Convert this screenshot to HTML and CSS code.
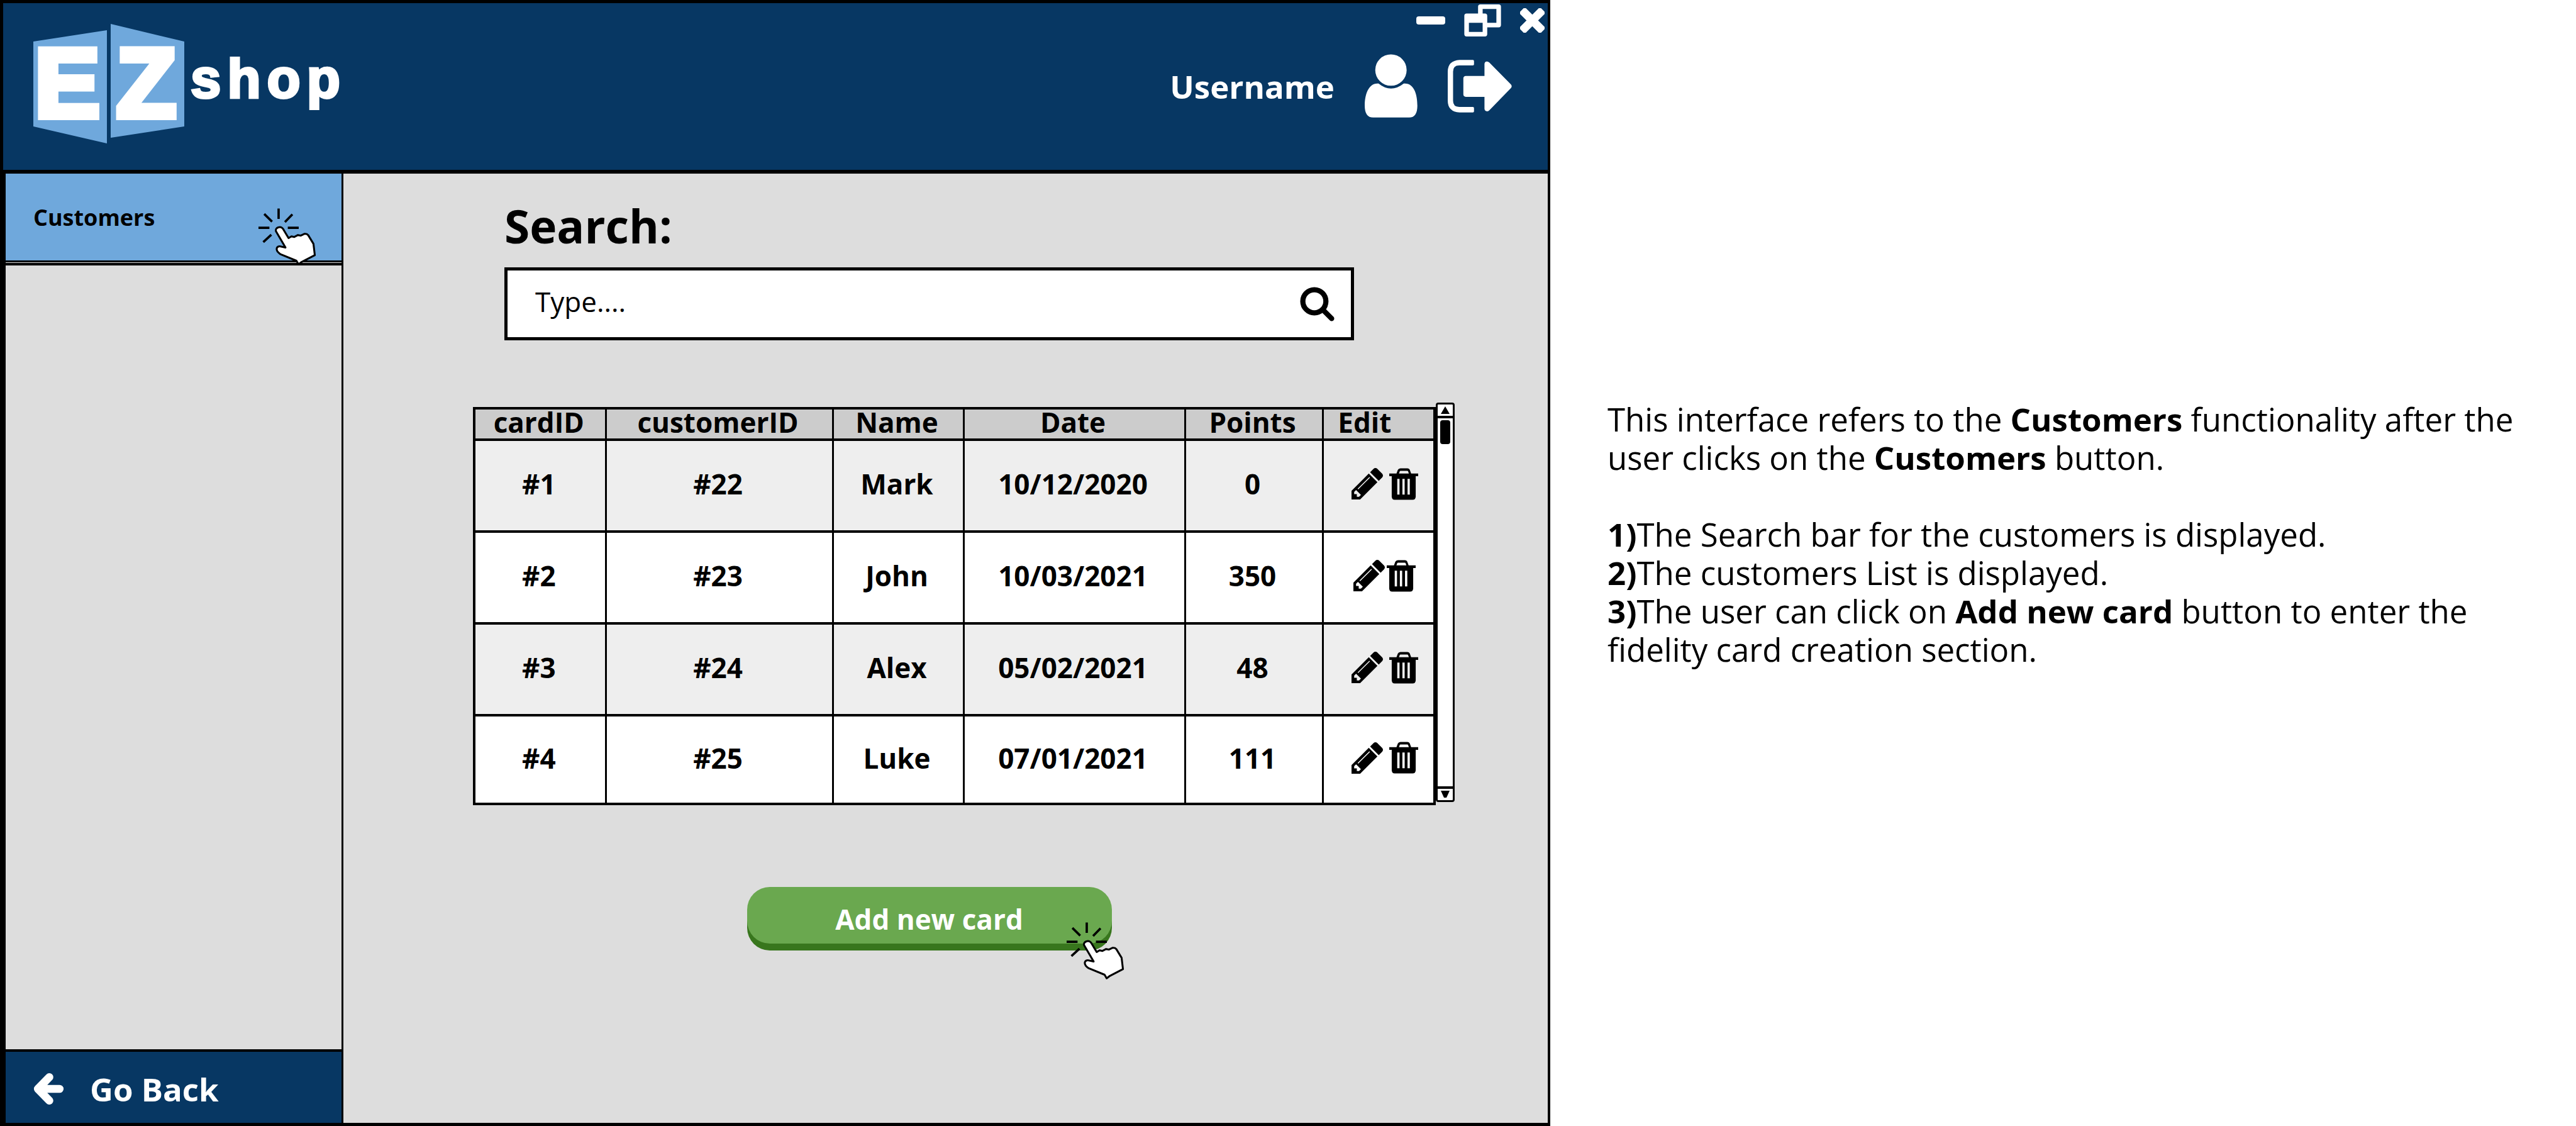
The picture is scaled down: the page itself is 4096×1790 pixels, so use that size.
FILE: index.html
```html
<!DOCTYPE html>
<html lang="en">
<head>
<meta charset="utf-8">
<title>EZShop - Customers</title>
<link rel="stylesheet" href="styles.css">
</head>
<body>
<svg class="sprite" aria-hidden="true">
  <symbol id="pencil" viewBox="128 149 1515 1515">
    <path d="M491 1536l91-91-235-235-91 91v107h128v128h107zm523-928q0-22-22-22-10 0-17 7l-542 542q-7 7-7 17 0 22 22 22 10 0 17-7l542-542q7-7 7-17zm-54-192l416 416-832 832h-416v-416zm683 96q0 53-37 90l-166 166-416-416 166-165q36-38 90-38 53 0 91 38l235 234q37 39 37 91z"/>
  </symbol>
  <symbol id="trash" viewBox="222 31 152 166">
    <path fill-rule="evenodd" d="M222 59H260L267 40Q271 31 281 31H317Q327 31 330 40L337 59H374V73H361V181Q359 197 345 197H250Q237 197 235 181V73H222ZM273 59H325L321 47Q320 45 317 45H281Q278 45 277 47ZM264 87V169H276V87ZM291 87V169H303V87ZM318 87V169H330V87Z"/>
  </symbol>
  <symbol id="click-hand" viewBox="96 100 302 302">
    <path d="M201 102V156M96 202H153M249 202H306M126 130L167 170M273 132L234 172M163 238L121 277" fill="none" stroke="#000" stroke-width="12"/>
    <path d="M187 220C182 200 212 190 225 209L253 256L268 247L283 250L302 240L316 243L335 234Q348 232 355 240L383 286L390 345L322 380L305 393L294 374L209 339C180 318 189 293 215 300L237 305Z" fill="#fff" stroke="#000" stroke-width="10" stroke-linejoin="round"/>
  </symbol>
</svg>
<div class="page">
  <div class="window">
    <header class="topbar">
      <svg class="logo" viewBox="0 0 490 192" role="img" aria-label="EZ shop">
        <path d="M0 28L117 10V190L0 163ZM123 0L240 28V163L123 181Z" fill="#6fa8dc"/>
        <text class="logo-mark" x="2" y="148">E</text>
        <text class="logo-mark" x="132" y="148">Z</text>
        <text class="logo-name" x="250" y="117">shop</text>
      </svg>
      <div class="topbar-tools">
        <div class="window-controls">
          <button type="button" class="icon-button" aria-label="Minimize">
            <svg width="46" height="13"><rect width="46" height="13" rx="4" fill="#fff"/></svg>
          </button>
          <button type="button" class="icon-button" aria-label="Restore">
            <svg width="59" height="51" viewBox="0 0 64 56"><path fill="#fff" fill-rule="evenodd" d="M28 0H60Q64 0 64 4V36Q64 40 60 40H40V52Q40 56 36 56H4Q0 56 0 52V20Q0 16 4 16H24V4Q24 0 28 0ZM32 8V16H36Q40 16 40 20V32H56V8ZM8 32V48H32V32Z"/></svg>
          </button>
          <button type="button" class="icon-button" aria-label="Close">
            <svg width="39" height="39" viewBox="0 0 42 42"><path d="M8 8L34 34M34 8L8 34" stroke="#fff" stroke-width="14" stroke-linecap="square" fill="none"/></svg>
          </button>
        </div>
        <div class="account">
          <span class="username">Username</span>
          <svg width="84" height="101" viewBox="30 51 276 331" fill="#fff" aria-hidden="true">
            <circle cx="167" cy="134" r="82"/>
            <path d="M102 204Q167 257 234 204C290 200 305 265 305 320Q305 382 262 382H74Q30 382 30 320C30 265 48 200 102 204Z"/>
          </svg>
          <button type="button" class="icon-button" aria-label="Log out">
            <svg width="102" height="84" viewBox="468 78 337 276" fill="#fff">
              <path d="M530 78H600Q606 78 606 84V101Q606 107 600 107H528Q496 107 496 139V293Q496 325 528 325H600Q606 325 606 331V348Q606 354 600 354H530Q468 350 468 292V140Q468 82 530 78Z"/>
              <path d="M661 162V99Q662 86 674 86Q680 86 686 91L800 207Q808 216 800 226L686 343Q680 348 674 348Q662 346 661 335V272H563Q550 271 550 259V175Q550 163 563 162Z"/>
            </svg>
          </button>
        </div>
      </div>
    </header>
    <div class="body">
      <nav class="sidebar">
        <a class="nav-item" href="#customers">Customers
          <svg class="pointer pointer-nav" aria-hidden="true"><use href="#click-hand"/></svg>
        </a>
        <div class="nav-space"></div>
        <a class="go-back" href="#back">
          <svg width="49" height="52" viewBox="0 0 54 57" aria-hidden="true"><path d="M28 8L8 28.500L28 49M10 28.500H46" stroke="#fff" stroke-width="14" stroke-linecap="round" stroke-linejoin="round" fill="none"/></svg>
          <span>Go Back</span>
        </a>
      </nav>
      <main class="content">
        <form class="search">
          <label class="search-label" for="search">Search:</label>
          <div class="search-box">
            <input id="search" type="text" placeholder="Type....">
            <button type="submit" class="icon-button" aria-label="Search">
              <svg width="55" height="55" viewBox="0 0 60 60" fill="none" stroke="#000"><circle cx="25" cy="25" r="20" stroke-width="9"/><path d="M40 40L55 55" stroke-width="9" stroke-linecap="round"/></svg>
            </button>
          </div>
        </form>
        <div class="list">
          <table class="cards">
            <colgroup><col class="c-card"><col class="c-customer"><col class="c-name"><col class="c-date"><col class="c-points"><col></colgroup>
            <thead>
              <tr><th>cardID</th><th>customerID</th><th>Name</th><th>Date</th><th>Points</th><th class="edit-head">Edit</th></tr>
            </thead>
            <tbody>
              <tr><td>#1</td><td>#22</td><td>Mark</td><td>10/12/2020</td><td>0</td>
                <td class="edit"><div class="actions"><button type="button" class="icon-button" aria-label="Edit card 1"><svg class="pencil"><use href="#pencil"/></svg></button><button type="button" class="icon-button" aria-label="Delete card 1"><svg class="trash"><use href="#trash"/></svg></button></div></td></tr>
              <tr><td>#2</td><td>#23</td><td>John</td><td>10/03/2021</td><td>350</td>
                <td class="edit"><div class="actions actions-tight"><button type="button" class="icon-button" aria-label="Edit card 2"><svg class="pencil"><use href="#pencil"/></svg></button><button type="button" class="icon-button" aria-label="Delete card 2"><svg class="trash"><use href="#trash"/></svg></button></div></td></tr>
              <tr><td>#3</td><td>#24</td><td>Alex</td><td>05/02/2021</td><td>48</td>
                <td class="edit"><div class="actions"><button type="button" class="icon-button" aria-label="Edit card 3"><svg class="pencil"><use href="#pencil"/></svg></button><button type="button" class="icon-button" aria-label="Delete card 3"><svg class="trash"><use href="#trash"/></svg></button></div></td></tr>
              <tr><td>#4</td><td>#25</td><td>Luke</td><td>07/01/2021</td><td>111</td>
                <td class="edit"><div class="actions"><button type="button" class="icon-button" aria-label="Edit card 4"><svg class="pencil"><use href="#pencil"/></svg></button><button type="button" class="icon-button" aria-label="Delete card 4"><svg class="trash"><use href="#trash"/></svg></button></div></td></tr>
            </tbody>
          </table>
          <div class="scrollbar">
            <button type="button" class="scroll-arrow scroll-up" aria-label="Scroll up"><svg width="14" height="12" viewBox="0 0 14 12"><path d="M7 0L14 12H0Z"/></svg></button>
            <div class="scroll-track"><div class="scroll-thumb"></div></div>
            <button type="button" class="scroll-arrow scroll-down" aria-label="Scroll down"><svg width="14" height="12" viewBox="0 0 14 12"><path d="M0 0H14L9 11H5Z"/></svg></button>
          </div>
        </div>
        <div class="add">
          <button type="button" class="add-button">Add new card
            <svg class="pointer pointer-add" aria-hidden="true"><use href="#click-hand"/></svg>
          </button>
        </div>
      </main>
    </div>
  </div>
  <aside class="notes">
    <p>This interface refers to the <b>Customers</b> functionality after the user clicks on the <b>Customers</b> button.</p>
    <p><b>1)</b>The Search bar for the customers is displayed.<br><b>2)</b>The customers List is displayed.<br><b>3)</b>The user can click on <b>Add new card</b> button to enter the fidelity card creation section.</p>
  </aside>
</div>
</body>
</html>
```
FILE: styles.css
```css
* { box-sizing: border-box; }

body {
  margin: 0;
  background: #fff;
  color: #000;
  font-family: "Open Sans", sans-serif;
}

button, input { font: inherit; color: inherit; }
svg { display: block; }
.sprite { position: absolute; width: 0; height: 0; }

.icon-button {
  display: block;
  padding: 0;
  border: 0;
  background: none;
}

.page {
  display: grid;
  grid-template-columns: 2465fr 1631fr;
  min-height: 100vh;
}

.window {
  display: flex;
  flex-direction: column;
  border: 5px solid #000;
  border-right-width: 4px;
  background: #ddd;
}

/* Top bar */
.topbar {
  display: flex;
  justify-content: space-between;
  min-height: 271px;
  border-bottom: 6px solid #000;
  background: #073763;
  color: #fff;
}

.logo {
  width: 490px;
  height: 192px;
  margin: 33px 0 0 48px;
  overflow: visible;
  fill: #fff;
}

.logo-mark, .logo-name {
  font-family: "Liberation Sans", Arial, sans-serif;
  font-weight: 700;
  stroke: #fff;
}

.logo-mark { font-size: 156px; stroke-width: 10px; }
.logo-name { font-size: 87px; stroke-width: 4px; letter-spacing: 10px; }

.topbar-tools {
  display: flex;
  flex-direction: column;
  gap: 28px;
  padding: 2px 5px 0 0;
}

.window-controls {
  display: flex;
  justify-content: flex-end;
  align-items: center;
  gap: 30px;
}

.account {
  display: flex;
  align-items: center;
  gap: 48px;
  padding-right: 52px;
}

.username { font-size: 51px; font-weight: 700; }

/* Sidebar */
.body { display: flex; flex: 1; }

.sidebar {
  display: flex;
  flex-direction: column;
  width: 541px;
  border: solid #000;
  border-width: 0 3px 0 4px;
}

.nav-item {
  position: relative;
  display: flex;
  align-items: center;
  height: 141px;
  padding-left: 44px;
  border-bottom: 3px solid #000;
  background: #6fa8dc;
  color: #000;
  font-size: 36px;
  font-weight: 700;
  text-decoration: none;
}

.nav-space {
  flex: 1;
  margin-top: 1px;
  border: solid #000;
  border-width: 4px 0;
}

.go-back {
  display: flex;
  align-items: center;
  gap: 41px;
  height: 113px;
  padding: 4px 0 0 44px;
  background: #073763;
  color: #fff;
  font-size: 51px;
  font-weight: 700;
  text-decoration: none;
}

.pointer {
  position: absolute;
  width: 92px;
  height: 92px;
}

.pointer-nav { right: 40px; bottom: -9px; }
.pointer-add { right: -20px; top: 56px; }

/* Main content */
.content {
  flex: 1;
  padding: 33px 148px 0 206px;
}

.search, .add { margin: 0 160px 0 50px; }

.search-label {
  display: block;
  font-size: 73px;
  font-weight: 700;
  line-height: 100px;
}

.search-box {
  display: flex;
  align-items: center;
  height: 116px;
  margin-top: 16px;
  padding: 0 26px 0 44px;
  border: 5px solid #000;
  background: #fff;
}

.search-box input {
  flex: 1;
  min-width: 0;
  padding: 0 0 8px;
  border: 0;
  outline: 0;
  background: none;
  font-size: 44px;
}

.search-box input::placeholder { color: #000; opacity: 1; }

.list {
  display: flex;
  margin-top: 99px;
}

.cards {
  flex: 1;
  margin-top: 7px;
  table-layout: fixed;
  border-collapse: collapse;
  border: 4px solid #000;
  background: #fff;
  font-size: 44px;
  font-weight: 700;
  line-height: 40px;
  text-align: center;
}

.c-card { width: 209px; }
.c-customer { width: 361px; }
.c-name { width: 208px; }
.c-date { width: 352px; }
.c-points { width: 219px; }

.cards th, .cards td {
  padding: 0 4px 6px 0;
  border: solid #000;
  border-width: 4px 3px;
}

.cards th { height: 49px; background: #ccc; }
.cards td { height: 146px; }
.cards tbody tr:nth-child(odd) { background: #eee; }
.cards tbody tr:last-child td { height: 141px; }
.cards .edit-head { padding-right: 44px; }
.cards .edit { padding: 0 0 6px 20px; }

.actions {
  display: flex;
  justify-content: center;
  gap: 10px;
}

.actions-tight { gap: 3px; }
.pencil { width: 50px; height: 50px; }
.trash { width: 46px; height: 51px; }

.scrollbar {
  display: flex;
  flex-direction: column;
  width: 30px;
  margin-bottom: 5px;
  border: 3px solid #000;
  border-radius: 4px;
  background: #fff;
}

.scroll-arrow {
  display: flex;
  align-items: center;
  justify-content: center;
  height: 22px;
  padding: 0;
  border: 0 solid #000;
  background: none;
}

.scroll-up { border-bottom-width: 4px; }
.scroll-down { border-top-width: 4px; }
.scroll-track { flex: 1; padding: 3px 4px; }
.scroll-thumb { height: 38px; border-radius: 4px; background: #000; }

.add {
  display: flex;
  justify-content: center;
  margin-top: 130px;
}

.add-button {
  position: relative;
  width: 580px;
  height: 90px;
  padding: 12px 0 0;
  border: 0;
  border-radius: 36px;
  background: #6aa84f;
  box-shadow: 0 11px 0 #38761d;
  color: #fff;
  font-size: 44px;
  font-weight: 700;
  line-height: 60px;
}

/* Notes beside the window */
.notes {
  padding: 636px 60px 0 91px;
  font-size: 51px;
  line-height: 61px;
}

.notes p { margin: 0 0 61px; }
```
